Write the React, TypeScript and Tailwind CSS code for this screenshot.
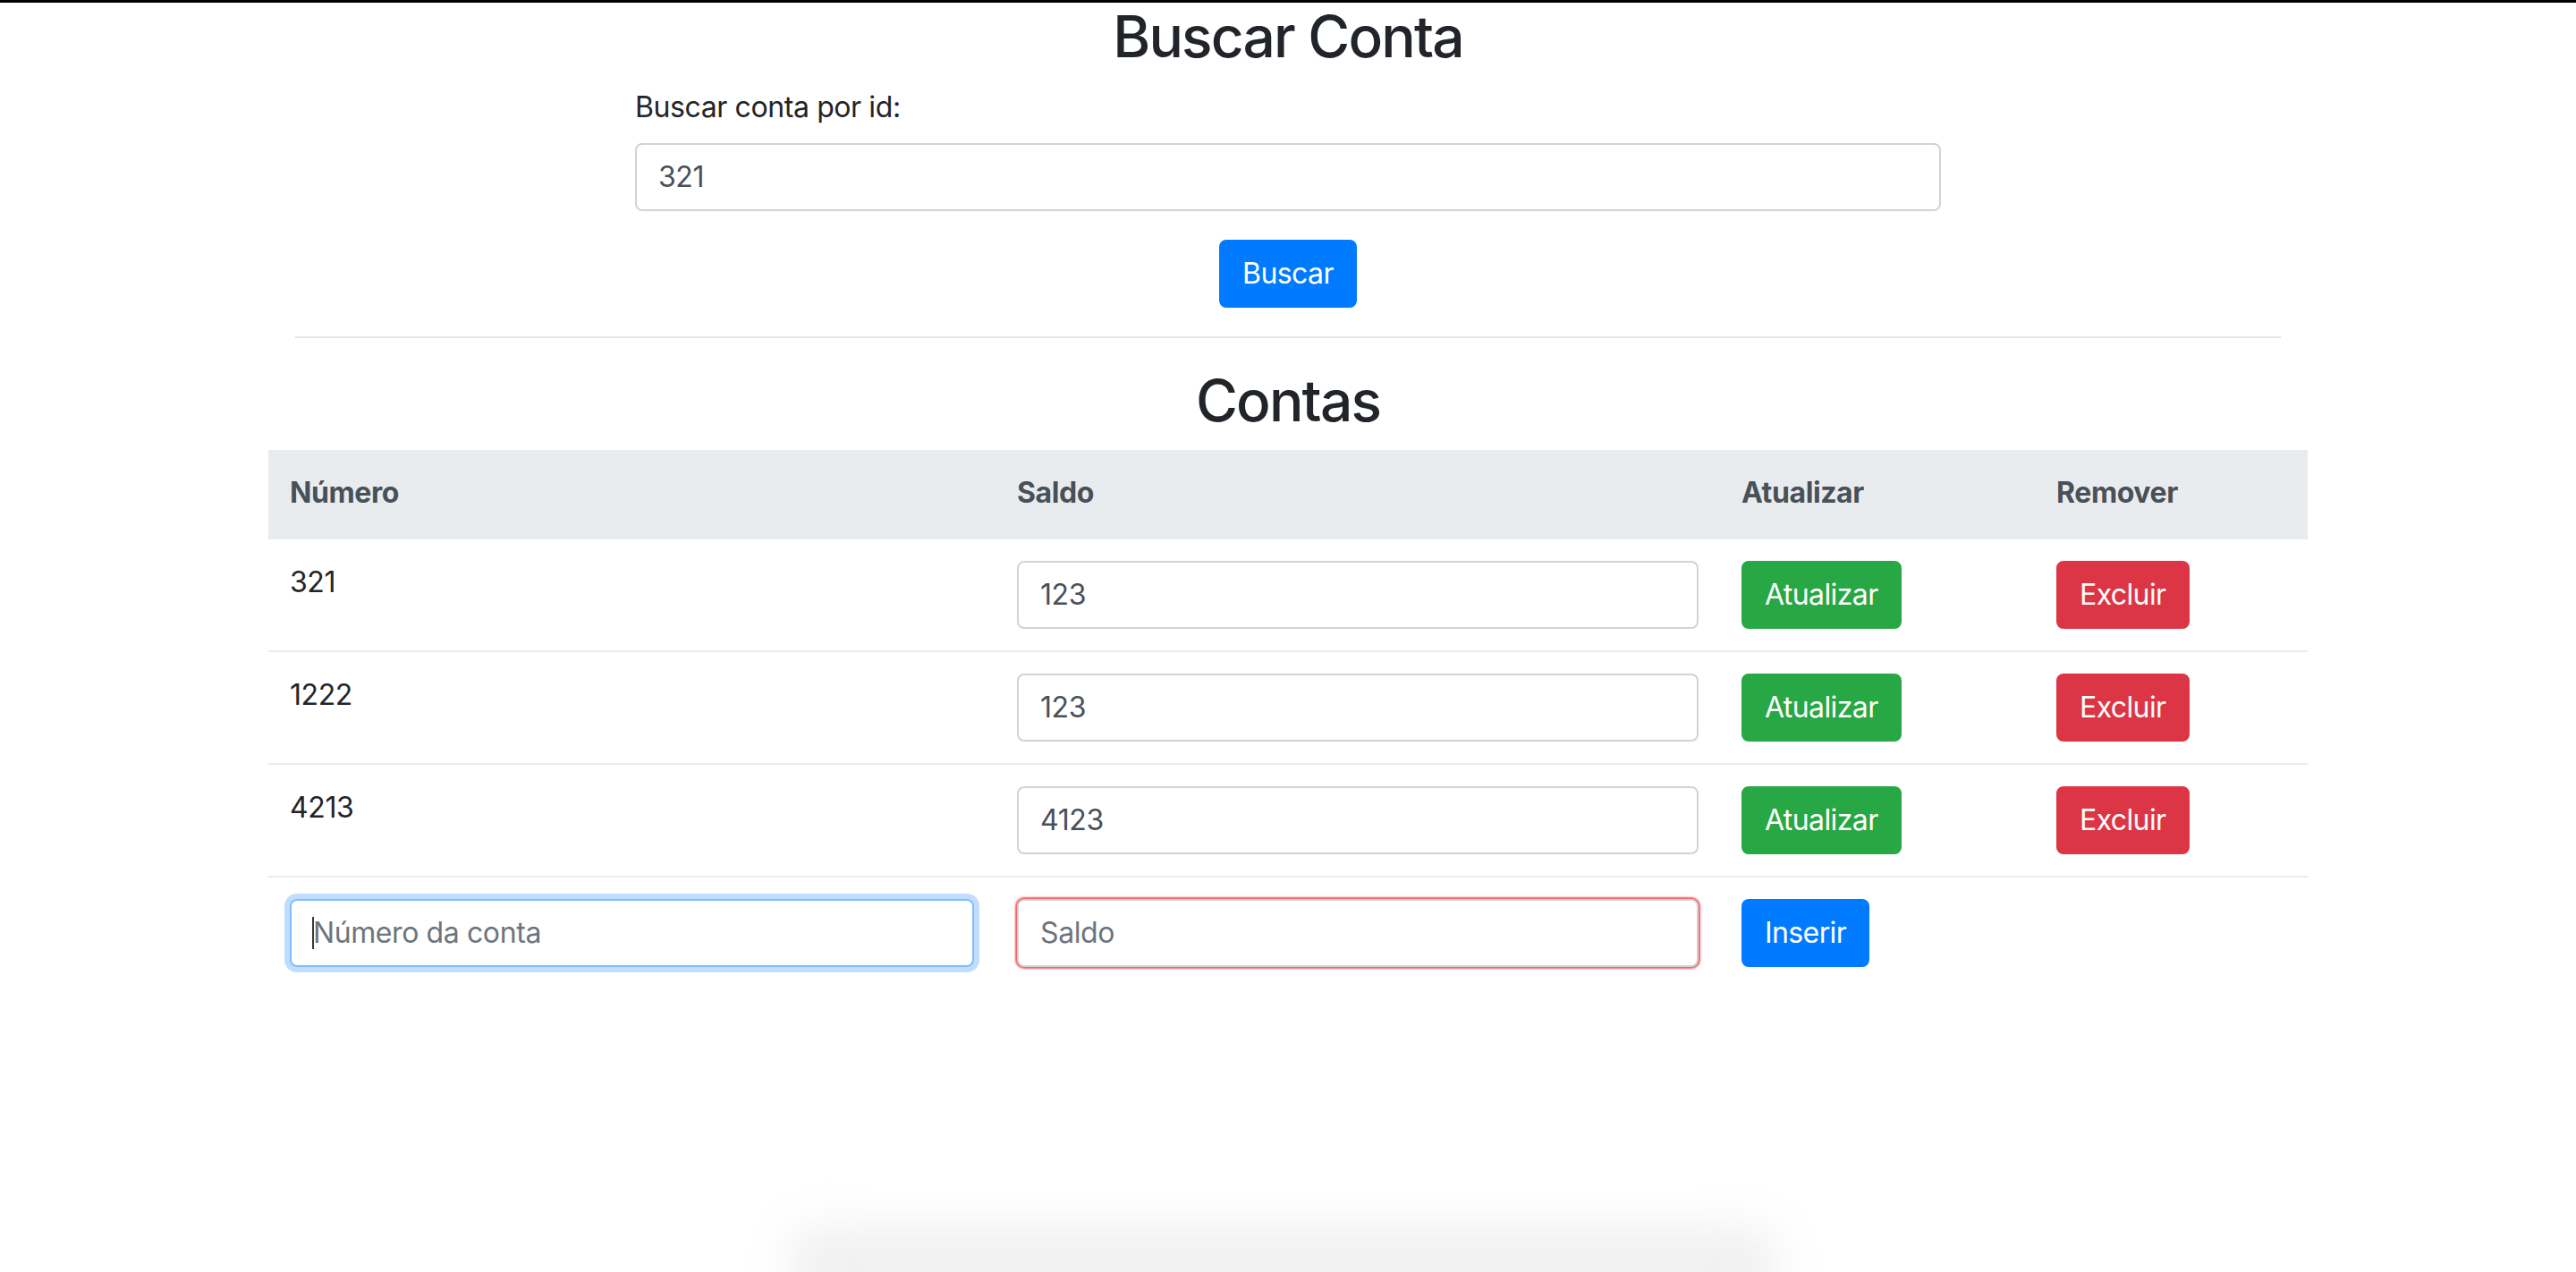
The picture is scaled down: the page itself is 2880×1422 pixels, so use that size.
const contas = [
  { numero: '321', saldo: '123' },
  { numero: '1222', saldo: '123' },
  { numero: '4213', saldo: '4123' },
]

const inputBase =
  'h-[76px] w-full rounded-[8px] border-2 bg-white px-[24px] text-[32px] leading-[48px] tracking-[-0.4px] text-[#495057] outline-none placeholder:text-[#6c757d]'

const btnBase = 'h-[76px] rounded-[8px] border-2 px-[24px] text-[32px] leading-[48px] tracking-[-0.6px] text-white'

const App = () => {
  return (
    <div className="relative min-h-screen overflow-hidden bg-white font-[Inter,sans-serif] tracking-[-0.4px] text-[#212529]">
      <div className="h-[3px] bg-black" />

      <div className="mx-auto w-[2280px]">
        <h2 className="mb-[16px] text-center text-[64px] font-medium leading-[1.2] tracking-[-1.8px]">Buscar Conta</h2>

        <div className="mx-auto w-[1460px]">
          <div className="mb-[32px]">
            <label className="mb-[16px] block text-[32px] leading-[48px]">Buscar conta por id:</label>
            <input className={`${inputBase} border-[#ced4da]`} defaultValue="321" />
          </div>
          <div className="text-center">
            <button className={`${btnBase} border-[#007bff] bg-[#007bff]`}>Buscar</button>
          </div>
        </div>

        <hr className="mx-[30px] mt-[32px] mb-[32px] border-t-2 border-[#e6e6e6]" />

        <h2 className="mb-[16px] text-center text-[64px] font-medium leading-[1.2] tracking-[-1.8px]">Contas</h2>

        <table className="w-full table-fixed border-collapse text-[32px] leading-[48px]">
          <colgroup>
            <col className="w-[813px]" />
            <col className="w-[810px]" />
            <col className="w-[352px]" />
            <col className="w-[305px]" />
          </colgroup>
          <thead>
            <tr className="bg-[#e9ecef] text-left text-[#495057]">
              <th className="border-b-4 border-[#e9ecef] p-[24px] font-bold">Número</th>
              <th className="border-b-4 border-[#e9ecef] p-[24px] font-bold">Saldo</th>
              <th className="border-b-4 border-[#e9ecef] p-[24px] font-bold">Atualizar</th>
              <th className="border-b-4 border-[#e9ecef] p-[24px] font-bold">Remover</th>
            </tr>
          </thead>
          <tbody>
            {contas.map((conta) => (
              <tr key={conta.numero} className="border-t-2 border-[#e9ecef]">
                <td className="p-[24px] align-top">{conta.numero}</td>
                <td className="p-[24px] align-top">
                  <input className={`${inputBase} border-[#ced4da]`} defaultValue={conta.saldo} />
                </td>
                <td className="p-[24px] align-top">
                  <button className={`${btnBase} border-[#28a745] bg-[#28a745]`}>Atualizar</button>
                </td>
                <td className="p-[24px] align-top">
                  <button className={`${btnBase} border-[#dc3545] bg-[#dc3545]`}>Excluir</button>
                </td>
              </tr>
            ))}
            <tr className="border-t-2 border-[#e9ecef]">
              <td className="p-[24px] align-top">
                <div className="relative">
                  <input
                    className={`${inputBase} border-[#80bdff] shadow-[0_0_0_6px_rgba(0,123,255,0.25)]`}
                    placeholder="Número da conta"
                  />
                  {/* text caret */}
                  <span className="absolute top-[20px] left-[25px] h-[36px] w-[2px] bg-[#343a40]" />
                </div>
              </td>
              <td className="p-[24px] align-top">
                <input
                  className={`${inputBase} border-[#ced4da] shadow-[0_0_2px_2px_rgba(240,40,40,0.75)]`}
                  placeholder="Saldo"
                />
              </td>
              <td className="p-[24px] align-top">
                <button className={`${btnBase} border-[#007bff] bg-[#007bff]`}>Inserir</button>
              </td>
              <td className="p-[24px]" />
            </tr>
          </tbody>
        </table>
      </div>

      {/* faint shadow at the bottom edge */}
      <div className="absolute bottom-[-30px] left-[880px] h-[80px] w-[1110px] rounded-[40px] bg-[#f0f0f0] blur-[24px]" />
    </div>
  )
}

export default App
